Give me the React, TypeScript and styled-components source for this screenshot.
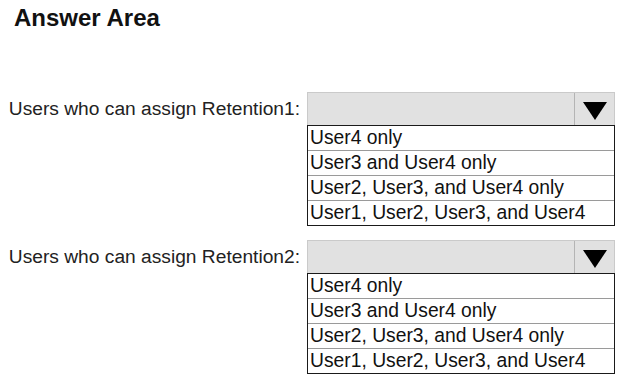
import { createGlobalStyle, styled } from 'styled-components'

const GlobalStyle = createGlobalStyle`
  html, body {
    margin: 0;
    padding: 0;
    background: #ffffff;
  }
  body {
    font-family: 'Liberation Sans', Arial, sans-serif;
    color: #1e1e1e;
  }
`

const options = [
  'User4 only',
  'User3 and User4 only',
  'User2, User3, and User4 only',
  'User1, User2, User3, and User4',
]

const questions = [
  { label: 'Users who can assign Retention1:' },
  { label: 'Users who can assign Retention2:' },
]

const Dropdown = () => (
  <SelectBox>
    <SelectHeader>
      <SelectField />
      <ArrowButton>
        <svg width="24" height="18" viewBox="0 0 24 18">
          <polygon points="0,0 24,0 12,18" fill="#000" />
        </svg>
      </ArrowButton>
    </SelectHeader>
    <OptionList>
      {options.map((o) => (
        <Option key={o}>{o}</Option>
      ))}
    </OptionList>
  </SelectBox>
)

export default function App() {
  return (
    <>
      <GlobalStyle />
      <Page>
        <Title>Answer Area</Title>
        <Questions>
          {questions.map((q) => (
            <QuestionRow key={q.label}>
              <Label>{q.label}</Label>
              <Dropdown />
            </QuestionRow>
          ))}
        </Questions>
      </Page>
    </>
  )
}

const Page = styled.div`
  width: 627px;
  height: 380px;
  overflow: hidden;
`

const Title = styled.h1`
  margin: 0;
  padding: 3px 0 0 14px;
  font-size: 24px;
  line-height: 29px;
  font-weight: 700;
  color: #111;
`

const Questions = styled.div`
  margin-top: 60px;
  display: flex;
  flex-direction: column;
  gap: 14px;
`

const QuestionRow = styled.div`
  display: grid;
  grid-template-columns: 300px 308px;
  column-gap: 7px;
  align-items: start;
`

const Label = styled.div`
  justify-self: end;
  height: 33px;
  display: flex;
  align-items: center;
  font-size: 19.2px;
  color: #222;
  white-space: nowrap;
`

const SelectBox = styled.div`
  display: flex;
  flex-direction: column;
  width: 308px;
`

const SelectHeader = styled.div`
  display: flex;
  height: 33px;
  box-sizing: border-box;
  background: #e1e1e1;
  border: 1px solid #cacaca;
  border-bottom: none;
`

const SelectField = styled.div`
  flex: 1;
`

const ArrowButton = styled.div`
  width: 40px;
  border-left: 1px solid #b4b4b4;
  display: flex;
  align-items: center;
  justify-content: center;
  padding-top: 3px;
  box-sizing: border-box;
`

const OptionList = styled.div`
  border: 1px solid #1a1a1a;
  background: #fff;
`

const Option = styled.div`
  height: 24px;
  line-height: 24px;
  padding-left: 2px;
  font-size: 19.3px;
  color: #111;
  white-space: nowrap;

  & + & {
    border-top: 1px solid #9a9a9a;
  }
`
